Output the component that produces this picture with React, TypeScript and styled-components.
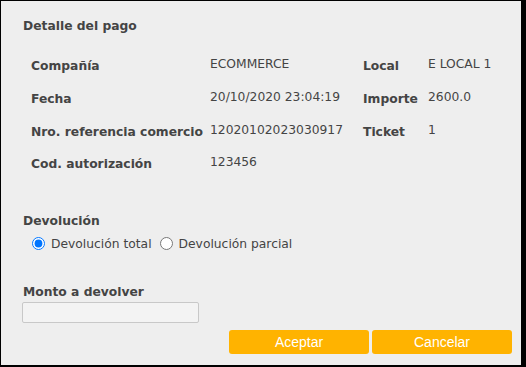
import styled, { createGlobalStyle } from "styled-components";

const GlobalStyle = createGlobalStyle`
  html, body {
    margin: 0;
    padding: 0;
    background: #000;
  }
  body {
    font-family: "DejaVu Sans", Verdana, sans-serif;
  }
`;

const Panel = styled.div`
  box-sizing: border-box;
  margin: 1px 0 0 1px;
  width: 520px;
  height: 364px;
  background: #eeeeee;
  color: #444;
  padding: 17px 0 0 22px;
  display: flex;
  flex-direction: column;
`;

const Heading = styled.h3`
  margin: 0;
  font-size: 12.3px;
  font-weight: bold;
  color: #444;
  line-height: 16px;
`;

const Details = styled.div`
  display: grid;
  grid-template-columns: 179px 153px 65px auto;
  grid-auto-rows: 32.67px;
  align-items: center;
  margin: 15px 0 0 8px;
  font-size: 12.3px;
`;

const Label = styled.span`
  font-weight: bold;
  white-space: nowrap;
  transform: translateY(1px);
`;

const Value = styled.span`
  white-space: nowrap;
  transform: translateY(-1px);
`;

const Section = styled.div<{ $top: number }>`
  margin-top: ${(p) => p.$top}px;
  display: flex;
  flex-direction: column;
`;

const RadioRow = styled.div`
  display: flex;
  align-items: center;
  margin: 8px 0 0 9px;
  font-size: 12.3px;
  color: #444;
`;

const RadioLabel = styled.label`
  display: flex;
  align-items: center;
  gap: 6px;
  margin-right: 8px;

  input {
    margin: 0;
    width: 13px;
    height: 13px;
  }
`;

const AmountInput = styled.input`
  box-sizing: border-box;
  width: 177px;
  height: 21px;
  margin: 2px 0 0 -1px;
  border: 1px solid #c8c8c8;
  border-radius: 2px;
  background: #f3f3f3;
`;

const Buttons = styled.div`
  display: flex;
  justify-content: flex-end;
  gap: 3px;
  margin: 7px 9px 0 0;
`;

const Button = styled.button`
  width: 140px;
  height: 24px;
  border: none;
  border-radius: 3px;
  background: #ffb300;
  color: #fff;
  font-family: "Liberation Sans", Arial, sans-serif;
  font-size: 14px;
  padding: 0;
  cursor: pointer;
`;

const rows: [string, string, string?, string?][] = [
  ["Compañía", "ECOMMERCE", "Local", "E LOCAL 1"],
  ["Fecha", "20/10/2020 23:04:19", "Importe", "2600.0"],
  ["Nro. referencia comercio", "12020102023030917", "Ticket", "1"],
  ["Cod. autorización", "123456"],
];

export default function App() {
  return (
    <>
      <GlobalStyle />
      <Panel>
        <Heading>Detalle del pago</Heading>
        <Details>
          {rows.flatMap(([l1, v1, l2, v2]) => [
            <Label key={l1 + "-l1"}>{l1}</Label>,
            <Value key={l1 + "-v1"}>{v1}</Value>,
            <Label key={l1 + "-l2"}>{l2 ?? ""}</Label>,
            <Value key={l1 + "-v2"}>{v2 ?? ""}</Value>,
          ])}
        </Details>
        <Section $top={33}>
          <Heading>Devolución</Heading>
          <RadioRow>
            <RadioLabel>
              <input type="radio" name="dev" defaultChecked />
              Devolución total
            </RadioLabel>
            <RadioLabel>
              <input type="radio" name="dev" />
              Devolución parcial
            </RadioLabel>
          </RadioRow>
        </Section>
        <Section $top={33}>
          <Heading>Monto a devolver</Heading>
          <AmountInput type="text" />
        </Section>
        <Buttons>
          <Button>Aceptar</Button>
          <Button>Cancelar</Button>
        </Buttons>
      </Panel>
    </>
  );
}
